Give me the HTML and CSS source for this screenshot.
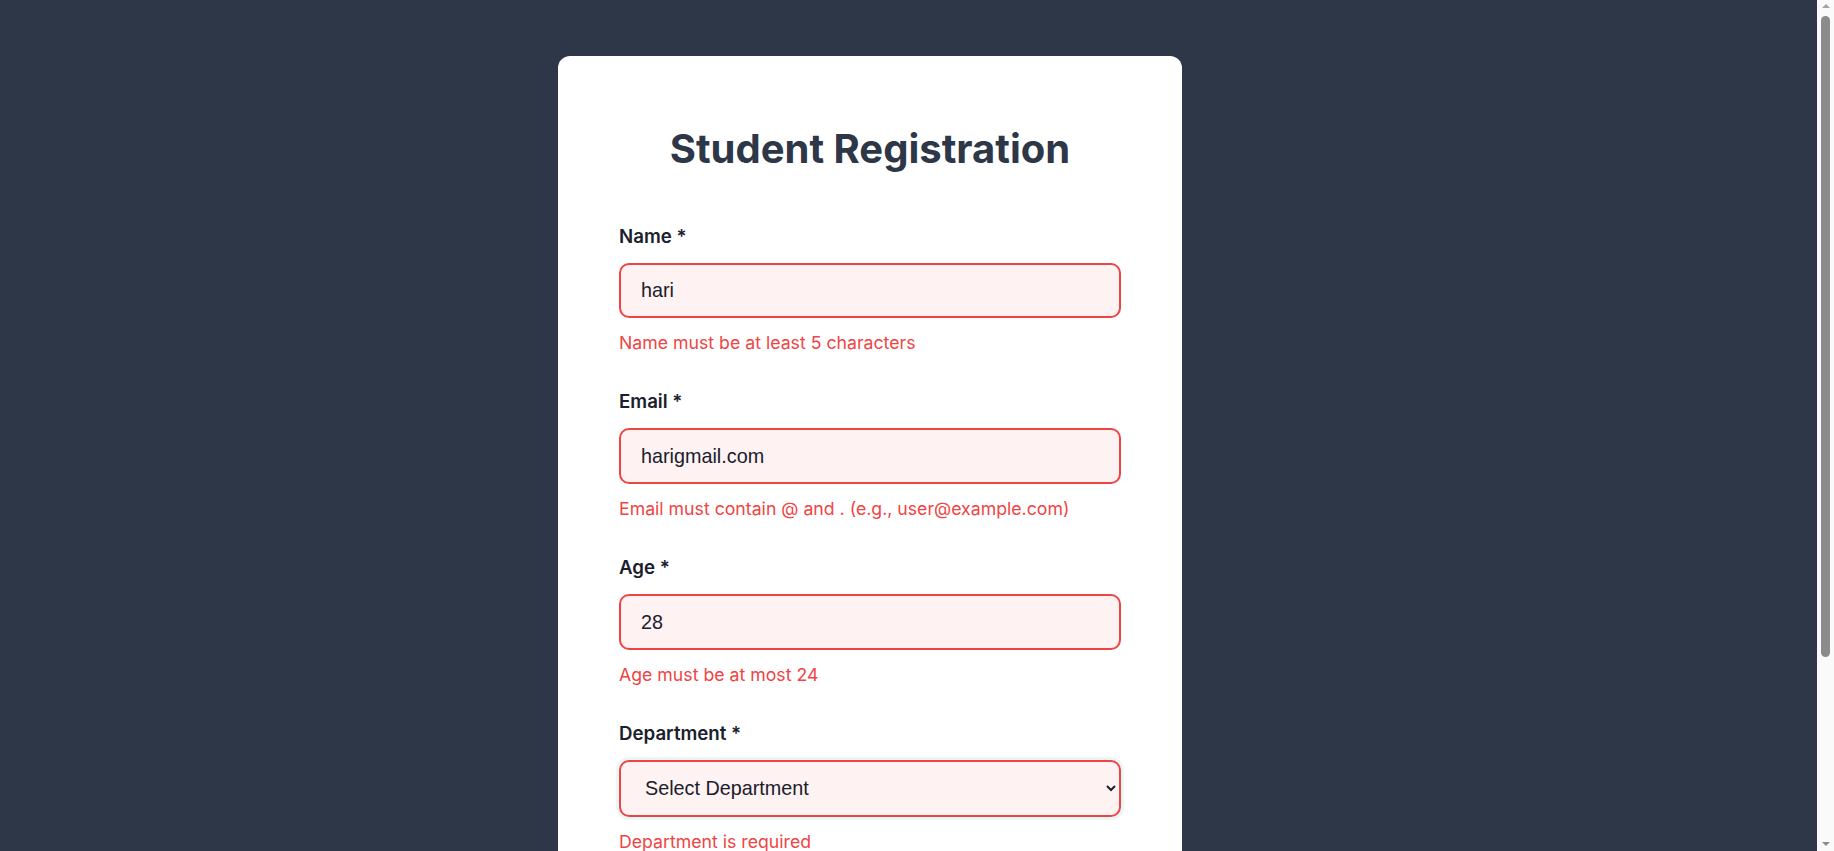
FILE: index.html
```html
<!DOCTYPE html>
<html lang="en">
<head>
<meta charset="utf-8">
<title>Student Registration</title>
<link rel="stylesheet" href="styles.css">
</head>
<body>
<div class="page">
  <div class="card">
    <h1 class="title">Student Registration</h1>
    <form class="form">
      <div class="field">
        <label class="label" for="name">Name *</label>
        <input class="control invalid" id="name" type="text" value="hari">
        <div class="error">Name must be at least 5 characters</div>
      </div>
      <div class="field">
        <label class="label" for="email">Email *</label>
        <input class="control invalid" id="email" type="text" value="harigmail.com">
        <div class="error">Email must contain @ and . (e.g., user@example.com)</div>
      </div>
      <div class="field">
        <label class="label" for="age">Age *</label>
        <input class="control invalid" id="age" type="text" value="28">
        <div class="error">Age must be at most 24</div>
      </div>
      <div class="field">
        <label class="label" for="dept">Department *</label>
        <select class="control select invalid focused" id="dept">
          <option>Select Department</option>
          <option>Computer Science</option>
          <option>Electronics</option>
          <option>Mechanical</option>
        </select>
        <div class="error">Department is required</div>
      </div>
      <button class="submit" type="button">Register</button>
    </form>
  </div>
</div>
<div class="scrollbar" aria-hidden="true">
  <div class="sb-arrow sb-up"></div>
  <div class="sb-thumb"></div>
  <div class="sb-arrow sb-down"></div>
</div>
</body>
</html>
```

FILE: styles.css
```css
html, body {
  margin: 0;
  padding: 0;
}

body {
  background: #2d3748;
  font-family: Inter, "Noto Sans", sans-serif;
}

.page {
  padding: 56px 0 56px 558px;
}

.card {
  width: 624px;
  box-sizing: border-box;
  background: #ffffff;
  border-radius: 12px;
  padding: 0 61px 76px;
}

.title {
  margin: 0;
  padding-top: 68.5px;
  font-size: 40px;
  line-height: 48px;
  font-weight: 700;
  color: #2d3748;
  text-align: center;
}

.form {
  margin-top: 53px;
  display: flex;
  flex-direction: column;
}

.field {
  display: flex;
  flex-direction: column;
  margin-bottom: 38.4px;
}

.label {
  font-size: 18.7px;
  line-height: 21px;
  font-weight: 600;
  color: #1a202c;
  margin-bottom: 16px;
}

.control {
  width: 100%;
  height: 55.5px;
  box-sizing: border-box;
  border: 2px solid #e2e8f0;
  border-radius: 10px;
  padding: 0 20px;
  font-family: "Liberation Sans", Arial, sans-serif;
  font-size: 19.8px;
  color: #1a202c;
  background: #ffffff;
  outline: none;
}

.control.invalid {
  border-color: #ef4444;
  background: #fef2f2;
}

.select {
  height: 56.5px;
}

.focused {
  box-shadow: 0 0 0 3px rgba(56, 178, 172, 0.1);
}

.error {
  margin-top: 15px;
  font-size: 17.7px;
  line-height: 20px;
  color: #ef4444;
}

.submit {
  height: 56px;
  border: none;
  border-radius: 10px;
  background: #2d3748;
  color: #ffffff;
  font-family: Inter, sans-serif;
  font-size: 19px;
  font-weight: 600;
}

.scrollbar {
  position: fixed;
  top: 0;
  right: 0;
  width: 17px;
  height: 100%;
  background: #fafafa;
  display: flex;
  flex-direction: column;
  align-items: center;
}

.sb-thumb {
  width: 9px;
  margin-top: 8px;
  height: 641px;
  border-radius: 5px;
  background: #8b8b8b;
}

.sb-arrow {
  width: 0;
  height: 0;
  border-left: 4px solid transparent;
  border-right: 4px solid transparent;
}

.sb-up {
  margin-top: 4px;
  border-bottom: 4px solid #a3a3a3;
}

.sb-down {
  margin-top: auto;
  margin-bottom: 5px;
  border-top: 4px solid #8b8b8b;
}
```
